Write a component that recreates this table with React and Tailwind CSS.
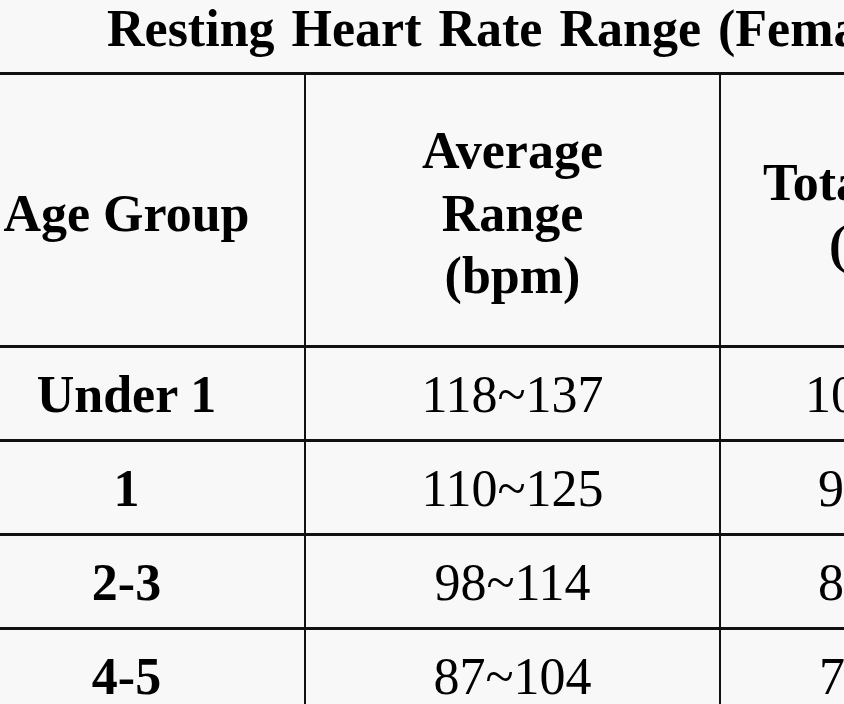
const rows = [
  { age: 'Under 1', avg: '118~137', total: '102~155' },
  { age: '1', avg: '110~125', total: '94~140' },
  { age: '2-3', avg: '98~114', total: '82~130' },
  { age: '4-5', avg: '87~104', total: '74~116' },
];

export default function App() {
  return (
    <div className="w-[844px] h-[704px] overflow-hidden bg-[#f8f8f8] text-black font-['Liberation_Serif',serif] text-[52px]">
      {/* Title */}
      <div className="h-[72px] pl-[107px] whitespace-nowrap font-bold leading-[58px] [word-spacing:4px]">
        Resting Heart Rate Range (Female)
      </div>

      <div className="border-t-[3px] border-[#111]">
        {/* Header row */}
        <div className="flex h-[273px] border-b-[3px] border-[#111] font-bold leading-[1.2] text-center">
          <div className="w-[304px] shrink-0 pr-[51px] pt-[8px] flex items-center justify-center whitespace-nowrap">
            Age Group
          </div>
          <div className="w-[415px] shrink-0 border-l-2 border-[#111] pt-[8px] flex items-center justify-center">
            <div>
              Average
              <br />
              Range
              <br />
              (bpm)
            </div>
          </div>
          <div className="w-[354px] shrink-0 border-l-2 border-[#111] pt-[8px] flex items-center justify-center whitespace-nowrap">
            <div>
              Total Range
              <br />
              (bpm)
            </div>
          </div>
        </div>

        {/* Data rows */}
        {rows.map((r) => (
          <div key={r.age} className="flex h-[94px] border-b-[3px] border-[#111] leading-[1.2] text-center">
            <div className="w-[304px] shrink-0 pr-[51px] pt-[4px] flex items-center justify-center font-bold whitespace-nowrap">
              {r.age}
            </div>
            <div className="w-[415px] shrink-0 border-l-2 border-[#111] pt-[4px] flex items-center justify-center whitespace-nowrap">
              {r.avg}
            </div>
            <div className="w-[354px] shrink-0 border-l-2 border-[#111] pt-[4px] flex items-center justify-center whitespace-nowrap">
              {r.total}
            </div>
          </div>
        ))}
      </div>
    </div>
  );
}
